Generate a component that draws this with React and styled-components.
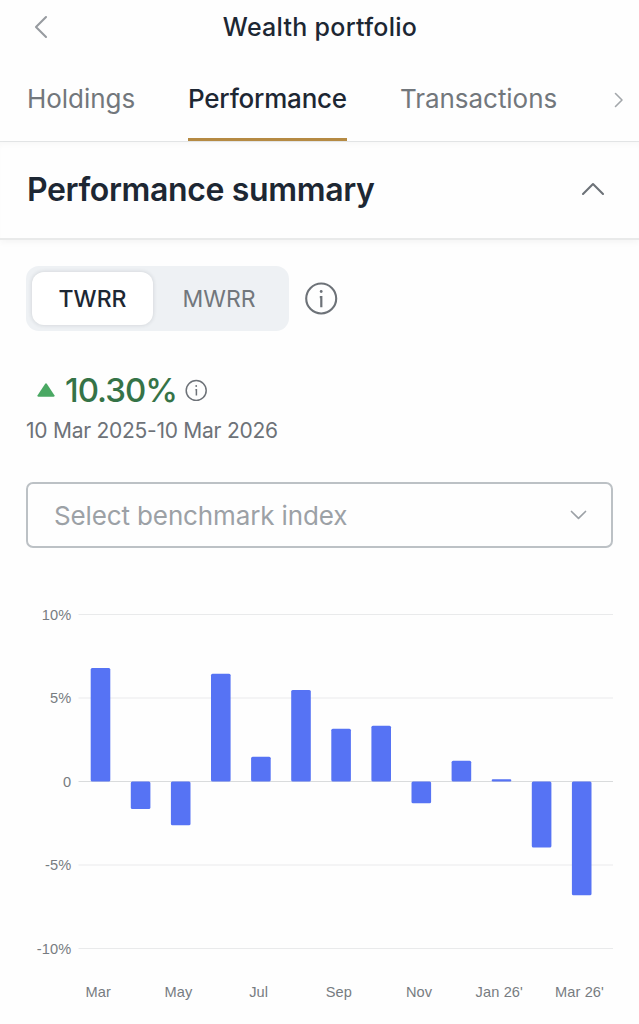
import React from "react";
import styled, { createGlobalStyle, css } from "styled-components";

const GlobalStyle = createGlobalStyle`
  *, *::before, *::after { box-sizing: border-box; }
  body {
    margin: 0;
    background: #fefefe;
    color: #1d2733;
    font-family: Inter, "Liberation Sans", sans-serif;
  }
  button {
    margin: 0;
    padding: 0;
    border: 0;
    background: none;
    color: inherit;
    font: inherit;
    white-space: nowrap;
  }
  svg { display: block; flex: none; }
`;

const Screen = styled.main`
  display: flex;
  flex-direction: column;
  height: 1024px;
  overflow: hidden;
`;

const Header = styled.header`
  display: grid;
  grid-template-columns: 60px 1fr 60px;
  align-items: center;
  height: 54px;
  padding: 0 0 0 1px;
`;

const BackButton = styled.button`
  display: flex;
  padding-left: 32px;
  color: #979ba0;
`;

const Title = styled.h1`
  margin: 0;
  text-align: center;
  font-size: 25px;
  line-height: 30px;
  font-weight: 500;
  letter-spacing: 0.28px;
`;

const TabBar = styled.nav`
  display: flex;
  align-items: stretch;
  height: 88px;
  padding: 0 15px 0 27px;
  border-bottom: 1px solid #e3e5e6;
`;

const Tab = styled.button`
  display: flex;
  align-items: center;
  width: ${(p) => p.$width}px;
  margin-right: 53px;
  padding-top: 5px;
  font-size: 26px;
  letter-spacing: ${(p) => p.$spacing}px;
  color: #72777c;
  border-bottom: 3.5px solid transparent;
  ${(p) =>
    p.$active &&
    css`
      color: #1d2733;
      font-weight: 500;
      border-color: #b58a43;
    `}
`;

const TabScroll = styled.button`
  display: flex;
  align-items: center;
  margin-left: auto;
  padding-top: 4px;
  color: #a3a7ab;
`;

const SectionHeader = styled.div`
  display: flex;
  align-items: center;
  justify-content: space-between;
  height: 98px;
  padding: 0 34px 2px 27px;
  border-bottom: 2px solid #e9eaea;
  box-shadow: 0 3px 6px rgba(0, 0, 0, 0.035), inset 0 5px 6px -3px rgba(0, 0, 0, 0.03);
  color: #6d7278;
`;

const SectionTitle = styled.h2`
  margin: 0;
  padding-top: 2px;
  color: #1d2733;
  font-size: 32px;
  line-height: 40px;
  font-weight: 600;
  letter-spacing: -0.36px;
`;

const Content = styled.section`
  display: flex;
  flex-direction: column;
  padding: 26px 26px 0;
`;

const MethodRow = styled.div`
  display: flex;
  align-items: center;
  gap: 16px;
  color: #6d7278;
`;

const Segmented = styled.div`
  display: flex;
  width: 263px;
  height: 65px;
  padding: 6px;
  border-radius: 13px;
  background: #eef1f4;
`;

const Segment = styled.button`
  flex: 1;
  padding-left: ${(p) => p.$offset}px;
  border-radius: 12px;
  font-size: 23px;
  color: #72777c;
  ${(p) =>
    p.$active &&
    css`
      flex: 0 0 121px;
      color: #1d2733;
      background: #fff;
      box-shadow: 0 0 4px rgba(30, 40, 50, 0.16);
      font-weight: 500;
    `}
`;

const ReturnRow = styled.div`
  display: flex;
  align-items: center;
  height: 44px;
  margin-top: 37px;
  padding-left: 10px;
  color: #6d7278;
`;

const ReturnValue = styled.strong`
  width: 112px;
  margin: 0 8px 0 9px;
  color: #357347;
  font-size: 33px;
  font-weight: 500;
  letter-spacing: -1px;
  white-space: nowrap;
`;

const Period = styled.p`
  margin: 5px 0 0;
  font-size: 21px;
  line-height: 28px;
  letter-spacing: -0.26px;
  color: #6d7278;
`;

const BenchmarkSelect = styled.button`
  display: flex;
  align-items: center;
  justify-content: space-between;
  height: 66px;
  margin-top: 37px;
  padding: 0 24px 0 26px;
  border: 2px solid #bcc1c5;
  border-radius: 7px;
  color: #9ca1a6;
  font-size: 26px;
  letter-spacing: -0.13px;
`;

const Chart = styled.svg`
  width: 100%;
  height: 440px;
  margin-top: 36px;
  overflow: visible;
  text {
    fill: #777c81;
    font-family: "Liberation Sans", Arial, sans-serif;
    font-size: 14.6px;
    letter-spacing: 0.12px;
  }
`;

const Chevron = ({ width, height, points, stroke = 2 }) => (
  <svg width={width} height={height} viewBox={`0 0 ${width} ${height}`} fill="none">
    <polyline points={points} stroke="currentColor" strokeWidth={stroke} strokeLinecap="round" strokeLinejoin="round" />
  </svg>
);

const LargeInfo = () => (
  <svg width="33" height="33" viewBox="0 0 33 33" fill="none">
    <circle cx="16.2" cy="16.5" r="15" stroke="currentColor" strokeWidth="2.1" />
    <circle cx="16.2" cy="9.5" r="1.4" fill="currentColor" />
    <path d="M14.8 15.2h1.5v10" stroke="currentColor" strokeWidth="2.2" />
  </svg>
);

const SmallInfo = () => (
  <svg width="22" height="22" viewBox="0 0 22 22" fill="none">
    <circle cx="11.2" cy="11.5" r="10" stroke="currentColor" strokeWidth="1.5" />
    <circle cx="11.2" cy="7" r="0.9" fill="currentColor" />
    <path d="M10.4 10.8h1v5.7" stroke="currentColor" strokeWidth="1.5" />
  </svg>
);

const UpTriangle = () => (
  <svg width="20" height="16" viewBox="0 0 20 16">
    <path d="M9.2 1.8 1.6 13.3q-.7 1.4.8 1.4h15.2q1.5 0 .8-1.4L10.8 1.8q-.8-1.1-1.6 0Z" fill="#4aa863" />
  </svg>
);

const months = [
  { label: "Mar", value: 6.8 },
  { value: -1.65 },
  { label: "May", value: -2.62 },
  { value: 6.45 },
  { label: "Jul", value: 1.48 },
  { value: 5.48 },
  { label: "Sep", value: 3.16 },
  { value: 3.34 },
  { label: "Nov", value: -1.3 },
  { value: 1.24 },
  { label: "Jan 26'", value: 0.13 },
  { value: -3.95 },
  { label: "Mar 26'", value: -6.81 },
];

const ticks = [
  { value: 10, label: "10%" },
  { value: 5, label: "5%" },
  { value: 0, label: "0" },
  { value: -5, label: "-5%" },
  { value: -10, label: "-10%" },
];

const zeroY = 197.5;
const unit = 16.7;

const ReturnsChart = () => (
  <Chart viewBox="0 0 587 440" preserveAspectRatio="xMinYMin meet">
    {ticks.map(({ value, label }) => {
      const y = zeroY - value * unit;
      return (
        <g key={label}>
          <line x1="52.5" x2="587" y1={y} y2={y} stroke={value === 0 ? "#d9dbdc" : "#e9eaeb"} strokeWidth="1.1" />
          <text x="45.3" y={y + 5} textAnchor="end">{label}</text>
        </g>
      );
    })}
    {months.map(({ value, label }, i) => {
      const x = 64.7 + i * 40.1;
      const h = Math.abs(value) * unit;
      return (
        <g key={i}>
          <rect x={x} y={value > 0 ? zeroY - h : zeroY} width="19.6" height={h} rx={Math.min(1.5, h / 2)} fill="#5673f4" />
          {label && <text x={x + 7.6} y="413" textAnchor="middle">{label}</text>}
        </g>
      );
    })}
  </Chart>
);

export default function App() {
  return (
    <Screen>
      <GlobalStyle />
      <Header>
        <BackButton aria-label="Back">
          <Chevron width={15} height={24} points="13,2 3,12 13,22" stroke={2.1} />
        </BackButton>
        <Title>Wealth portfolio</Title>
      </Header>
      <TabBar>
        <Tab $width={108} $spacing={-0.05}>Holdings</Tab>
        <Tab $width={159} $spacing={-0.22} $active>Performance</Tab>
        <Tab $width={157} $spacing={-0.05}>Transactions</Tab>
        <TabScroll aria-label="More tabs">
          <Chevron width={10} height={16} points="1.5,1.5 8,8 1.5,14.5" stroke={1.6} />
        </TabScroll>
      </TabBar>
      <SectionHeader>
        <SectionTitle>Performance summary</SectionTitle>
        <Chevron width={24} height={14} points="2,12 12,2 22,12" stroke={2.1} />
      </SectionHeader>
      <Content>
        <MethodRow>
          <Segmented>
            <Segment $active $offset={0}>TWRR</Segment>
            <Segment $offset={2}>MWRR</Segment>
          </Segmented>
          <LargeInfo />
        </MethodRow>
        <ReturnRow>
          <UpTriangle />
          <ReturnValue>10.30%</ReturnValue>
          <SmallInfo />
        </ReturnRow>
        <Period>10 Mar 2025-10 Mar 2026</Period>
        <BenchmarkSelect>
          Select benchmark index
          <Chevron width={17} height={10} points="1.5,1.5 8.5,8.3 15.5,1.5" stroke={1.7} />
        </BenchmarkSelect>
        <ReturnsChart />
      </Content>
    </Screen>
  );
}
